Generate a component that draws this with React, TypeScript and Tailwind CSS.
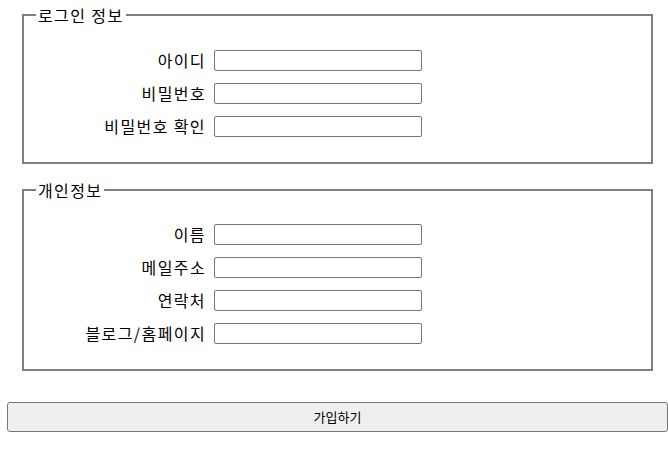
import React from "react";

const loginFields = ["아이디", "비밀번호", "비밀번호 확인"];
const personalFields = ["이름", "메일주소", "연락처", "블로그/홈페이지"];

function Row({ label }: { label: string }) {
  return (
    <div className="flex items-center gap-[8px]">
      <label className="w-[170px] text-right text-[16px] leading-[21px] tracking-[1.4px] text-black">{label}</label>
      <input
        type="text"
        className="w-[208px] h-[21px] rounded-[2px] border border-[#767676] bg-white px-1 text-[13px] outline-none"
      />
    </div>
  );
}

function Section({ title, fields, className }: { title: string; fields: string[]; className: string }) {
  return (
    <fieldset className={"mx-[15px] border-2 border-[#7f7f7f] px-[12px] pb-[25px] " + className}>
      <legend className="px-[2px] text-[16px] leading-[20px] tracking-[1.4px] text-black">{title}</legend>
      <div className="flex flex-col gap-[12px]">
        {fields.map((f) => (
          <Row key={f} label={f} />
        ))}
      </div>
    </fieldset>
  );
}

export default function App() {
  return (
    <div
      className="w-[668px] h-[451px] bg-white pl-[7px] pt-[5px]"
      style={{ fontFamily: '"Noto Sans CJK KR", "Noto Sans", sans-serif' }}
    >
      <Section title="로그인 정보" fields={loginFields} className="pt-[25px]" />
      <Section title="개인정보" fields={personalFields} className="mt-[16px] pt-[24px]" />
      <button
        type="button"
        className="mt-[31px] block w-[661px] h-[30px] rounded-[3px] border border-[#767676] bg-[#efefef] text-[13px] text-black"
      >
        가입하기
      </button>
    </div>
  );
}
